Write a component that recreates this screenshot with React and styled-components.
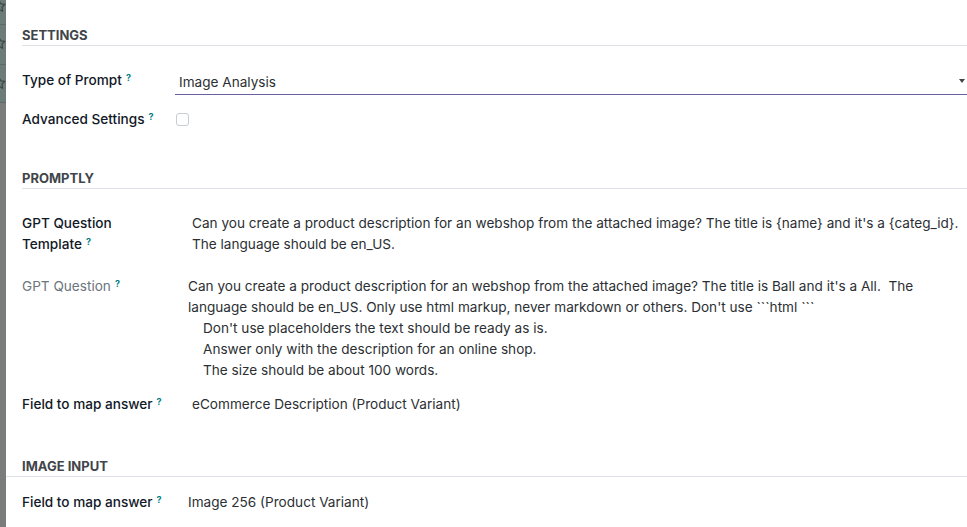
import React from "react";
import styled, { createGlobalStyle } from "styled-components";

const Global = createGlobalStyle`
  html, body { margin: 0; padding: 0; background: #fff; }
  body { font-family: "Inter", "Liberation Sans", sans-serif; color: #212529; }
  * { box-sizing: border-box; }
`;

const Page = styled.div`
  display: flex;
  width: 967px;
  height: 527px;
  overflow: hidden;
`;

const SideStrip = styled.div`
  width: 6px;
  flex: none;
  display: flex;
  flex-direction: column;
  background: #7a7c7b;
`;

const StripCell = styled.div`
  height: ${(p) => p.$h}px;
  background: #6c7c7a;
  border-bottom: 1px solid #5d6a69;
  overflow: hidden;
  position: relative;
  svg { position: absolute; left: -8px; top: ${(p) => p.$star}px; }
`;

const Main = styled.div`
  flex: 1;
  display: flex;
  flex-direction: column;
`;

const Group = styled.div`
  padding-left: ${(p) => (p.$flush ? 0 : 16)}px;
  margin-top: ${(p) => p.$mt}px;
`;

const Header = styled.div`
  font-size: 13px;
  line-height: 16px;
  font-weight: 700;
  text-transform: uppercase;
  color: #3f4549;
  padding-bottom: 2px;
  padding-left: ${(p) => (p.$flush ? 16 : 0)}px;
  border-bottom: 1px solid #dee2e6;
`;

const Row = styled.div`
  display: grid;
  grid-template-columns: 153px 1fr;
  align-items: start;
  margin-top: ${(p) => p.$mt}px;
  padding-left: ${(p) => (p.$flush ? 16 : 0)}px;
`;

const Label = styled.div`
  font-size: 13.6px;
  line-height: 21px;
  color: ${(p) => (p.$muted ? "#6c757d" : "#111827")};
  font-weight: ${(p) => (p.$muted ? 400 : 500)};
  padding-top: ${(p) => p.$pt ?? 0}px;
`;

const Help = styled.sup`
  color: #017e84;
  font-size: 9px;
  font-weight: 700;
  margin-left: 4px;
  vertical-align: top;
  position: relative;
  top: -3px;
`;

const Value = styled.div`
  font-size: 13.6px;
  line-height: 21px;
  color: #2b2f33;
  padding-left: ${(p) => p.$pl}px;
`;

const Indent = styled.div`
  padding-left: 15px;
`;

const SelectField = styled.div`
  display: flex;
  align-items: center;
  justify-content: space-between;
  padding: 4px 2px 1px 4px;
  border-bottom: 1px solid #6b5fa3;
  font-size: 13.6px;
  line-height: 21px;
  color: #2b2f33;
`;

const Caret = styled.span`
  width: 0;
  height: 0;
  border-left: 3.5px solid transparent;
  border-right: 3.5px solid transparent;
  border-top: 4px solid #444;
  margin-top: -4px;
`;

const Checkbox = styled.span`
  display: block;
  width: 13px;
  height: 13px;
  border: 1px solid #c9ccd0;
  border-radius: 3px;
  margin: 4px 0 0 1px;
`;

const Star = () => (
  <svg width="14" height="14" viewBox="0 0 24 24" fill="none" stroke="#3b4746" strokeWidth="2" strokeLinejoin="round">
    <path d="M12 2l3.1 6.3 6.9 1-5 4.9 1.2 6.9L12 17.8l-6.2 3.3L7 14.2 2 9.3l6.9-1z" />
  </svg>
);

export default function App() {
  return (
    <Page>
      <Global />
      <SideStrip>
        <StripCell $h={25} $star={-1}><Star /></StripCell>
        <StripCell $h={40} $star={11}><Star /></StripCell>
        <StripCell $h={38} $star={11}><Star /></StripCell>
      </SideStrip>
      <Main>
        <Group $mt={27}>
          <Header>Settings</Header>
          <Row $mt={22}>
            <Label $pt={2}>Type of Prompt<Help>?</Help></Label>
            <SelectField>
              <span>Image Analysis</span>
              <Caret />
            </SelectField>
          </Row>
          <Row $mt={14}>
            <Label>Advanced Settings<Help>?</Help></Label>
            <Checkbox />
          </Row>
        </Group>
        <Group $mt={40}>
          <Header>Promptly</Header>
          <Row $mt={24}>
            <Label>GPT Question<br />Template<Help>?</Help></Label>
            <Value $pl={17}>
              Can you create a product description for an webshop from the attached image? The title is {"{name}"} and it's a {"{categ_id}"}.
              <br />
              The language should be en_US.
            </Value>
          </Row>
          <Row $mt={21}>
            <Label $muted>GPT Question<Help>?</Help></Label>
            <Value $pl={13}>
              Can you create a product description for an webshop from the attached image? The title is Ball and it's a All.&nbsp; The language should be en_US. Only use html markup, never markdown or others. Don't use ```html ```
              <Indent>Don't use placeholders the text should be ready as is.</Indent>
              <Indent>Answer only with the description for an online shop.</Indent>
              <Indent>The size should be about 100 words.</Indent>
            </Value>
          </Row>
          <Row $mt={13}>
            <Label>Field to map answer<Help>?</Help></Label>
            <Value $pl={17}>eCommerce Description (Product Variant)</Value>
          </Row>
        </Group>
        <Group $flush $mt={43}>
          <Header $flush>Image Input</Header>
          <Row $flush $mt={15}>
            <Label>Field to map answer<Help>?</Help></Label>
            <Value $pl={13}>Image 256 (Product Variant)</Value>
          </Row>
        </Group>
      </Main>
    </Page>
  );
}
